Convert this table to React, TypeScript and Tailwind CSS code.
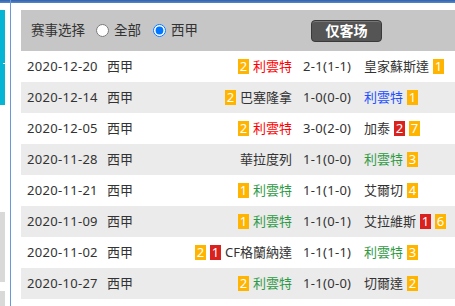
import React from "react";

type Badge = { n: string; c: "y" | "r" };
type Row = {
  date: string;
  home: string;
  homeColor?: string;
  homeBadges: Badge[];
  score: string;
  away: string;
  awayColor?: string;
  awayBadges: Badge[];
};

const RED = "text-[#ff0000]";
const BLUE = "text-[#2350ff]";
const GREEN = "text-[#2f9a45]";

const rows: Row[] = [
  { date: "2020-12-20", home: "利雲特", homeColor: RED, homeBadges: [{ n: "2", c: "y" }], score: "2-1(1-1)", away: "皇家蘇斯達", awayBadges: [{ n: "1", c: "y" }] },
  { date: "2020-12-14", home: "巴塞隆拿", homeBadges: [{ n: "2", c: "y" }], score: "1-0(0-0)", away: "利雲特", awayColor: BLUE, awayBadges: [{ n: "1", c: "y" }] },
  { date: "2020-12-05", home: "利雲特", homeColor: RED, homeBadges: [{ n: "2", c: "y" }], score: "3-0(2-0)", away: "加泰", awayBadges: [{ n: "2", c: "r" }, { n: "7", c: "y" }] },
  { date: "2020-11-28", home: "華拉度列", homeBadges: [], score: "1-1(0-0)", away: "利雲特", awayColor: GREEN, awayBadges: [{ n: "3", c: "y" }] },
  { date: "2020-11-21", home: "利雲特", homeColor: GREEN, homeBadges: [{ n: "1", c: "y" }], score: "1-1(1-0)", away: "艾爾切", awayBadges: [{ n: "4", c: "y" }] },
  { date: "2020-11-09", home: "利雲特", homeColor: GREEN, homeBadges: [{ n: "1", c: "y" }], score: "1-1(0-1)", away: "艾拉維斯", awayBadges: [{ n: "1", c: "r" }, { n: "6", c: "y" }] },
  { date: "2020-11-02", home: "CF格蘭納達", homeBadges: [{ n: "2", c: "y" }, { n: "1", c: "r" }], score: "1-1(1-1)", away: "利雲特", awayColor: GREEN, awayBadges: [{ n: "3", c: "y" }] },
  { date: "2020-10-27", home: "利雲特", homeColor: GREEN, homeBadges: [{ n: "2", c: "y" }], score: "1-1(0-0)", away: "切爾達", awayBadges: [{ n: "2", c: "y" }] },
];

function B({ b }: { b: Badge }) {
  return (
    <span
      className={
        "inline-flex h-[15px] w-[11px] items-center justify-center text-[13px] leading-none text-white " +
        (b.c === "y" ? "bg-[#ffb400]" : "bg-[#d9211e]")
      }
    >
      {b.n}
    </span>
  );
}

export default function App() {
  return (
    <div
      className="relative h-[306px] w-[455px] overflow-hidden bg-white text-[#333]"
      style={{ fontFamily: '"Noto Sans", "Noto Sans CJK TC", sans-serif' }}
    >
      <div className="h-[3px] w-full bg-gradient-to-b from-[#2f62ad] to-[#5a88c8]" />
      <div className="flex">
        {/* left strip */}
        <div className="flex w-[10px] flex-col">
          <div className="relative mt-[7px] h-[95px] w-[5px] bg-[#06b4d4]">
            <div className="absolute right-0 top-[53px] h-px w-[2px] bg-white" />
          </div>
          <div className="mt-[107px] h-[70px] w-[5px] bg-[#d9d9d9]" />
          <div className="mt-[9px] h-[20px] w-[5px] bg-[#d9d9d9]" />
        </div>
        <div className="-mt-[3px] w-px self-stretch bg-[#6a98d6]" />
        <div className="ml-[10px] mt-[7px] w-[434px] shrink-0">
          {/* header */}
          <div className="flex h-[41px] items-center bg-[#c6c6c6] text-[13px]">
            <div className="flex w-[290px] items-center pl-[10px]">
              <span className="text-[13.5px]">赛事选择</span>
              <label className="ml-[11px] flex items-center">
                <input type="radio" name="lg" className="m-0 h-[13px] w-[13px]" />
                <span className="ml-[5px] text-[13.5px]">全部</span>
              </label>
              <label className="ml-[12px] flex items-center">
                <input type="radio" name="lg" defaultChecked className="m-0 h-[13px] w-[13px]" />
                <span className="ml-[5px] text-[13.5px]">西甲</span>
              </label>
            </div>
            <button className="flex h-[22px] w-[71px] items-center justify-center rounded-[4px] border border-[#3a3a3a] bg-[#555555] text-[14px] font-bold text-white shadow-[inset_0_1px_0_#777]">
              仅客场
            </button>
          </div>
          {/* rows */}
          {rows.map((r, i) => (
            <div
              key={i}
              className={
                "flex h-[31px] items-center whitespace-nowrap pl-[6px] text-[13px] " +
                (i % 2 === 1 ? "bg-[#ebebeb]" : "bg-white")
              }
            >
              <span className="w-[80px] tracking-[0.3px]">{r.date}</span>
              <span className="w-[60px]">西甲</span>
              <span className="flex w-[125px] items-center justify-end gap-[4px]">
                {r.homeBadges.map((b, j) => (
                  <B key={j} b={b} />
                ))}
                <span className={r.homeColor ?? ""}>{r.home}</span>
              </span>
              <span className="w-[72px] pl-[11px] tracking-[0.3px]">{r.score}</span>
              <span className="flex items-center gap-[4px]">
                <span className={r.awayColor ?? ""}>{r.away}</span>
                {r.awayBadges.map((b, j) => (
                  <B key={j} b={b} />
                ))}
              </span>
            </div>
          ))}
        </div>
      </div>
    </div>
  );
}
